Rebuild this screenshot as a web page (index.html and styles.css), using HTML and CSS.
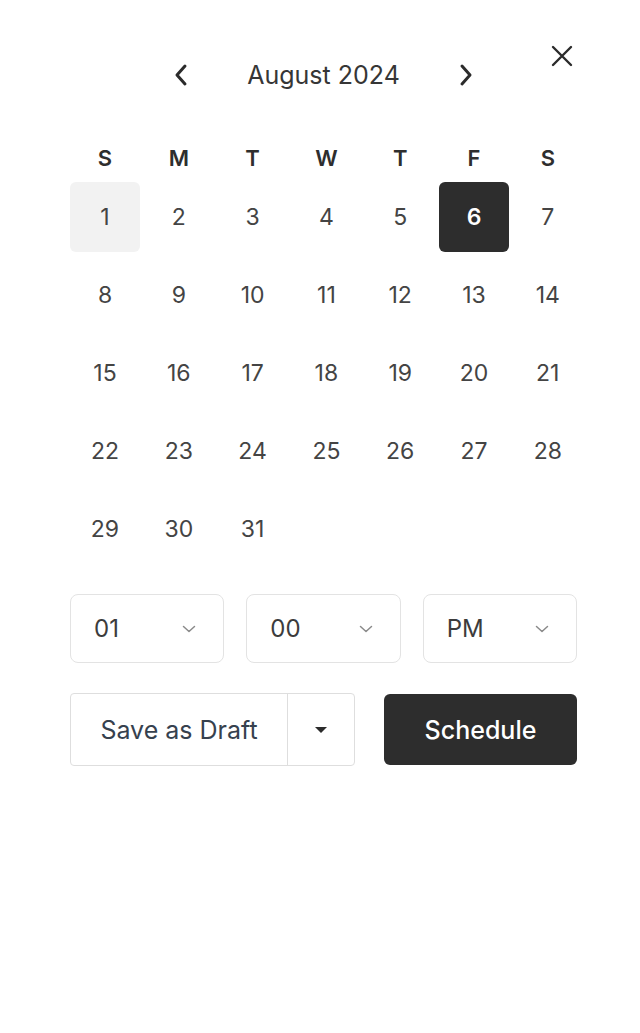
FILE: index.html
```html
<!DOCTYPE html>
<html lang="en">
<head>
<meta charset="utf-8">
<title>Schedule</title>
<link rel="stylesheet" href="styles.css">
</head>
<body>
<div class="picker">
  <button class="close" aria-label="Close">
    <svg width="22" height="22" viewBox="0 0 22 22"><path d="M2 2L20 20M20 2L2 20" stroke="#2b2b2b" stroke-width="2.4" stroke-linecap="round" fill="none"/></svg>
  </button>
  <div class="header">
    <button class="nav" aria-label="Previous month">
      <svg width="14" height="24" viewBox="0 0 14 24"><path d="M11 3L3 12L11 21" stroke="#2b2b2b" stroke-width="3" stroke-linecap="round" stroke-linejoin="round" fill="none"/></svg>
    </button>
    <div class="month">August 2024</div>
    <button class="nav" aria-label="Next month">
      <svg width="14" height="24" viewBox="0 0 14 24"><path d="M3 3L11 12L3 21" stroke="#2b2b2b" stroke-width="3" stroke-linecap="round" stroke-linejoin="round" fill="none"/></svg>
    </button>
  </div>
  <div class="weekdays">
    <span>S</span><span>M</span><span>T</span><span>W</span><span>T</span><span>F</span><span>S</span>
  </div>
  <div class="days">
    <div class="day today">1</div><div class="day">2</div><div class="day">3</div><div class="day">4</div><div class="day">5</div><div class="day selected">6</div><div class="day">7</div>
    <div class="day">8</div><div class="day">9</div><div class="day">10</div><div class="day">11</div><div class="day">12</div><div class="day">13</div><div class="day">14</div>
    <div class="day">15</div><div class="day">16</div><div class="day">17</div><div class="day">18</div><div class="day">19</div><div class="day">20</div><div class="day">21</div>
    <div class="day">22</div><div class="day">23</div><div class="day">24</div><div class="day">25</div><div class="day">26</div><div class="day">27</div><div class="day">28</div>
    <div class="day">29</div><div class="day">30</div><div class="day">31</div>
  </div>
  <div class="times">
    <div class="select"><span>01</span><svg width="14" height="8" viewBox="0 0 14 8"><path d="M1.5 1.5L7 6.5L12.5 1.5" stroke="#8a8a8a" stroke-width="1.5" stroke-linecap="round" stroke-linejoin="round" fill="none"/></svg></div>
    <div class="select"><span>00</span><svg width="14" height="8" viewBox="0 0 14 8"><path d="M1.5 1.5L7 6.5L12.5 1.5" stroke="#8a8a8a" stroke-width="1.5" stroke-linecap="round" stroke-linejoin="round" fill="none"/></svg></div>
    <div class="select"><span>PM</span><svg width="14" height="8" viewBox="0 0 14 8"><path d="M1.5 1.5L7 6.5L12.5 1.5" stroke="#8a8a8a" stroke-width="1.5" stroke-linecap="round" stroke-linejoin="round" fill="none"/></svg></div>
  </div>
  <div class="actions">
    <div class="draft-group">
      <button class="draft">Save as Draft</button>
      <button class="caret" aria-label="More options">
        <svg width="14" height="8" viewBox="0 0 14 8"><path d="M1 1H13L7 7Z" fill="#2b2b2b"/></svg>
      </button>
    </div>
    <button class="schedule">Schedule</button>
  </div>
</div>
</body>
</html>
```

FILE: styles.css
```css
* { box-sizing: border-box; }
html, body { margin: 0; padding: 0; background: #ffffff; }
body {
  font-family: Inter, "Noto Sans", "Liberation Sans", sans-serif;
  color: #333333;
}
button {
  font-family: inherit;
  border: none;
  background: none;
  padding: 0;
  cursor: pointer;
}
.picker {
  position: relative;
  width: 640px;
  padding: 55px 63px 0 70px;
}
.close {
  position: absolute;
  top: 45px;
  left: 551px;
  width: 22px;
  height: 22px;
  display: flex;
}
.header {
  height: 40px;
  display: flex;
  align-items: center;
  justify-content: center;
  gap: 59px;
}
.nav {
  width: 14px;
  height: 40px;
  display: flex;
  align-items: center;
  justify-content: center;
}
.month {
  font-size: 25px;
  color: #363636;
}
.weekdays,
.days {
  width: 513px;
  display: grid;
  grid-template-columns: repeat(7, 70px);
  column-gap: 3.8px;
}
.weekdays {
  margin-top: 50px;
  height: 24px;
  align-items: center;
  justify-items: center;
  font-size: 22px;
  font-weight: 600;
  color: #2e2e2e;
}
.days {
  margin-top: 13px;
  grid-auto-rows: 70px;
  row-gap: 8px;
}
.day {
  display: flex;
  align-items: center;
  justify-content: center;
  font-size: 23px;
  color: #444444;
  border-radius: 6px;
}
.day.today {
  background: #f2f2f2;
}
.day.selected {
  background: #2d2d2d;
  color: #ffffff;
  font-weight: 600;
}
.times {
  margin-top: 30px;
  display: grid;
  grid-template-columns: repeat(3, 1fr);
  column-gap: 22px;
}
.select {
  height: 69px;
  border: 1px solid #e3e3e3;
  border-radius: 8px;
  display: flex;
  align-items: center;
  justify-content: space-between;
  padding: 0 27px 0 23px;
  font-size: 24px;
  color: #3c3c3c;
}
.actions {
  margin-top: 30px;
  display: flex;
  align-items: center;
  gap: 29px;
}
.draft-group {
  width: 285px;
  height: 73px;
  border: 1px solid #dedede;
  border-radius: 4px;
  display: flex;
}
.draft {
  width: 217px;
  font-size: 25px;
  color: #36414e;
  border-right: 1px solid #dedede;
}
.caret {
  flex: 1;
  display: flex;
  align-items: center;
  justify-content: center;
}
.schedule {
  flex: 1;
  height: 71px;
  background: #2d2d2d;
  border-radius: 6px;
  color: #ffffff;
  font-size: 25px;
  font-weight: 500;
}
```
